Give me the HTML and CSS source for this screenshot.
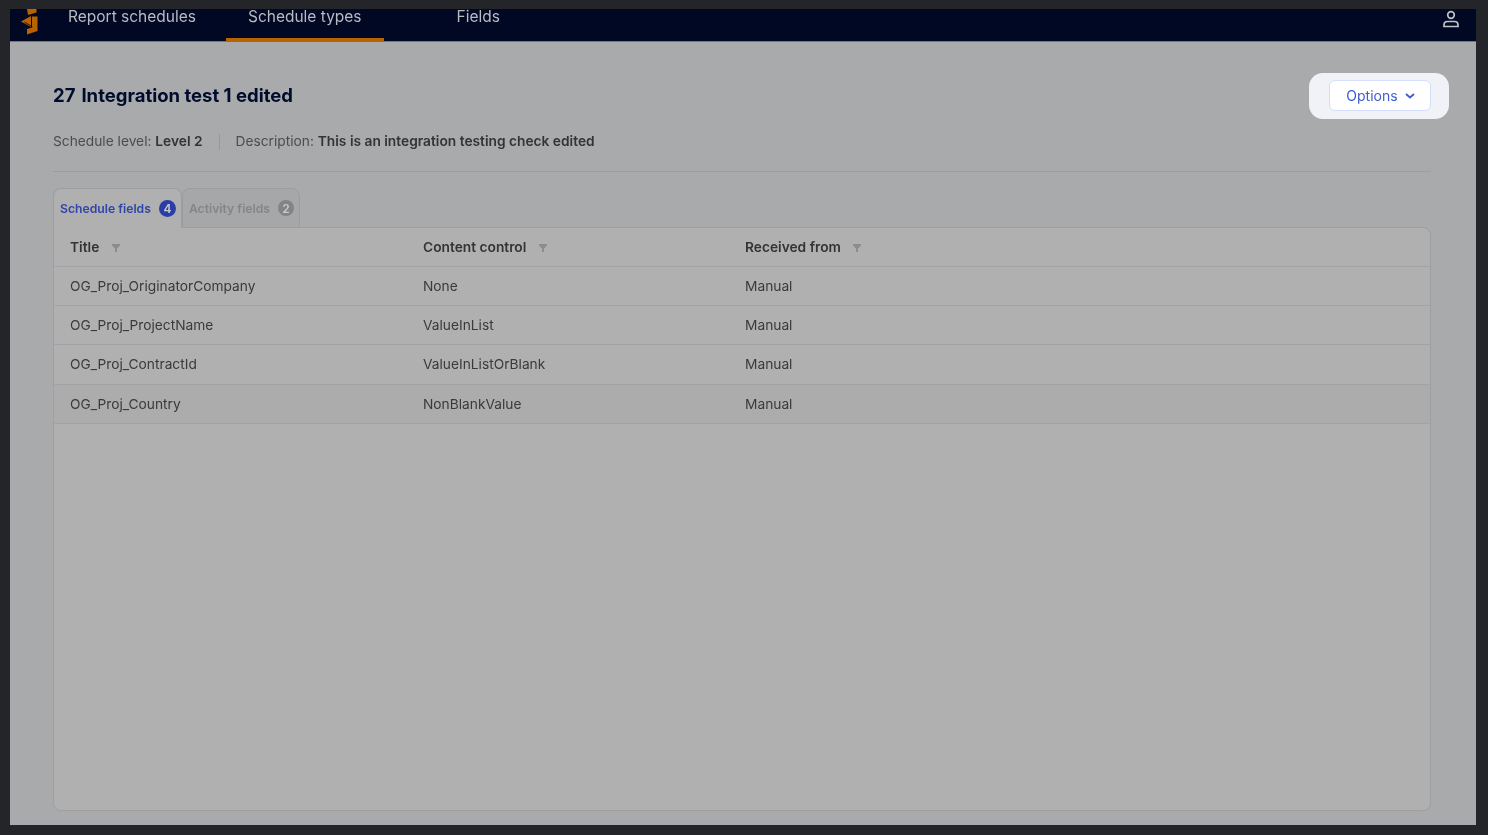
FILE: index.html
```html
<!DOCTYPE html>
<html lang="en">
<head>
  <meta charset="UTF-8" />
  <title>Schedule types</title>
  <link rel="stylesheet" href="styles.css">
</head>
<body>
  <div class="app">
    <nav class="topbar">
      <svg class="logo" width="18" height="26" viewBox="0 0 18 26">
        <path d="M6 0h9.500v3.500L7 6z" fill="#b86200"/>
        <path d="M0 12.500L10 7v11z" fill="#b86200"/>
        <path d="M11 7.500h5.500V22L6 25.500v-5.500l5-1.500z" fill="#b86200"/>
        <path d="M3.500 13l8 5" stroke="#000824" stroke-width="0.800" fill="none"/>
      </svg>
      <a class="nav-tab">Report schedules</a>
      <a class="nav-tab active">Schedule types</a>
      <a class="nav-tab fields">Fields</a>
      <svg class="user-icon" width="18" height="18" viewBox="0 0 18 18" fill="none" stroke="#bfc1c7" stroke-width="1.700">
        <circle cx="9" cy="5" r="3.300"/>
        <path d="M2 16.500v-1.500c0-2 1.500-3.500 3.500-3.500h7c2 0 3.500 1.500 3.500 3.500v1.500z"/>
      </svg>
    </nav>

    <main class="content">
      <div class="title-row">
        <h1><span class="title-id">27</span>Integration test 1 edited</h1>
        <div class="options-glow">
          <button class="options-btn">Options
            <svg width="10" height="6" viewBox="0 0 10 6" fill="none" stroke="#3f5bd0" stroke-width="1.800"><path d="M1 1l4 3.500L9 1"/></svg>
          </button>
        </div>
      </div>

      <div class="meta">
        <span>Schedule level: <b>Level 2</b></span>
        <i class="meta-sep"></i>
        <span>Description: <b>This is an integration testing check edited</b></span>
      </div>

      <div class="tabs">
        <div class="tab current">Schedule fields <span class="count">4</span></div>
        <div class="tab">Activity fields <span class="count">2</span></div>
      </div>

      <div class="table-card">
        <div class="row head">
          <div>Title <svg class="filter" viewBox="0 0 8 8"><path d="M0 0h8v1.500L5 4.500V8H3V4.500L0 1.500z"/></svg></div>
          <div>Content control <svg class="filter" viewBox="0 0 8 8"><path d="M0 0h8v1.500L5 4.500V8H3V4.500L0 1.500z"/></svg></div>
          <div>Received from <svg class="filter" viewBox="0 0 8 8"><path d="M0 0h8v1.500L5 4.500V8H3V4.500L0 1.500z"/></svg></div>
        </div>
        <div class="row"><div>OG_Proj_OriginatorCompany</div><div>None</div><div>Manual</div></div>
        <div class="row"><div>OG_Proj_ProjectName</div><div>ValueInList</div><div>Manual</div></div>
        <div class="row"><div>OG_Proj_ContractId</div><div>ValueInListOrBlank</div><div>Manual</div></div>
        <div class="row hover"><div>OG_Proj_Country</div><div>NonBlankValue</div><div>Manual</div></div>
      </div>
    </main>
  </div>
</body>
</html>
```

FILE: styles.css
```css
* {
  box-sizing: border-box;
}
html, body {
  height: 100%;
}
body {
  margin: 0;
  padding: 9px 12px 10px 10px;
  background-color: #232529;
  font-family: Inter, sans-serif;
  color: #3a3a3c;
  overflow: hidden;
}
.app {
  height: 816px;
  background-color: #a9aaac;
  display: flex;
  flex-direction: column;
}
.topbar {
  height: 33px;
  flex: none;
  display: flex;
  align-items: stretch;
  padding-left: 11px;
  background-color: #000824;
  border-bottom: 1px solid #73767f;
}
.logo {
  align-self: flex-start;
  margin-right: 7px;
}
.nav-tab {
  padding: 0 22px 15px;
  margin-right: 8px;
  display: flex;
  align-items: center;
  font-size: 15.500px;
  color: #b9bbc1;
  border-bottom: 4px solid transparent;
  margin-bottom: -1px;
  white-space: nowrap;
}
.nav-tab.active {
  border-bottom-color: #b86200;
}
.nav-tab.fields {
  margin-left: 43px;
}
.user-icon {
  margin: 1px 16px 0 auto;
}
.content {
  flex: 1;
  display: flex;
  flex-direction: column;
  padding: 31px 45px 14px 43px;
  min-height: 0;
}
.title-row {
  display: flex;
  align-items: center;
  justify-content: space-between;
}
h1 {
  margin: 0 0 2px;
  font-size: 18.500px;
  font-weight: 700;
  color: #000c2c;
}
.title-id {
  margin-right: 6px;
}
.options-glow {
  margin-right: -18px;
  padding: 7px 18px 8px 20px;
  background-color: #f0f2f7;
  border-radius: 14px;
}
.options-btn {
  width: 102px;
  height: 31px;
  padding: 0 0 0 1px;
  display: flex;
  align-items: center;
  justify-content: center;
  gap: 7px;
  background-color: #fff;
  border: 1px solid #d5dffb;
  border-radius: 6px;
  color: #3f5bd0;
  font-family: Inter, sans-serif;
  font-size: 14px;
}
.meta {
  margin-top: 14px;
  padding-bottom: 21px;
  display: flex;
  align-items: center;
  font-size: 13.750px;
  line-height: 17px;
  color: #4c4d50;
  border-bottom: 1px solid #9c9d9f;
}
.meta b {
  font-weight: 600;
  color: #333436;
}
.meta-sep {
  width: 1px;
  height: 16px;
  margin: 0 16px;
  background-color: #97989b;
}
.tabs {
  margin-top: 16px;
  height: 40px;
  display: flex;
  margin-bottom: -1px;
  position: relative;
}
.tab {
  padding: 0 5px 0 6px;
  display: flex;
  align-items: center;
  gap: 8px;
  font-size: 12.200px;
  font-weight: 600;
  color: #848587;
  background-color: #a6a7a9;
  border: 1px solid #9c9d9f;
  border-radius: 8px 8px 0 0;
}
.tab.current {
  color: #2f45a8;
  background-color: #b0b0b0;
  border-bottom-color: #b0b0b0;
}
.count {
  width: 16px;
  height: 16px;
  border-radius: 50%;
  display: flex;
  align-items: center;
  justify-content: center;
  font-size: 12px;
  color: #c9cad0;
  background-color: #838486;
}
.current .count {
  width: 17px;
  height: 17px;
  background-color: #2a3ea6;
}
.table-card {
  flex: 1;
  background-color: #b0b0b0;
  border: 1px solid #9f9fa1;
  border-radius: 0 8px 8px 8px;
  font-size: 13.750px;
}
.row {
  display: grid;
  grid-template-columns: 353px 322px 1fr;
  align-items: center;
  height: 39.400px;
  padding-left: 16px;
  border-bottom: 1px solid #a3a3a5;
}
.row.head {
  height: 38.500px;
  font-weight: 600;
  color: #333436;
}
.row.hover {
  background-color: #acacac;
}
.filter {
  width: 8px;
  height: 8px;
  margin-left: 9px;
  fill: #8b8c8e;
}
/* the source picture is a soft, scaled capture */
.nav-tab, h1, .meta, .tab, .row > div, .options-btn {
  filter: blur(0.350px);
}
```
